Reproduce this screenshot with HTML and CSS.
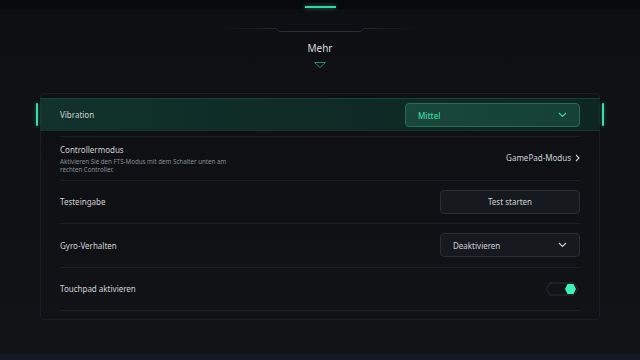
FILE: index.html
```html
<!DOCTYPE html>
<html lang="de">

<head>
  <meta charset="UTF-8">
  <meta name="viewport" content="width=device-width, initial-scale=1.0">
  <title>Mehr</title>
  <link rel="stylesheet" href="styles.css">
</head>

<body>
  <div class="topbar">
    <span class="tab-indicator"></span>
  </div>

  <header class="header">
    <svg class="header-line" width="200" height="6" viewBox="0 0 200 6">
      <defs>
        <linearGradient id="fade" x1="0" x2="1" y1="0" y2="0">
          <stop offset="0" stop-color="#2b2f35" stop-opacity="0" />
          <stop offset="0.35" stop-color="#2b2f35" />
          <stop offset="0.65" stop-color="#2b2f35" />
          <stop offset="1" stop-color="#2b2f35" stop-opacity="0" />
        </linearGradient>
      </defs>
      <polyline points="0,1.5 56,1.5 59,4.5 141,4.5 144,1.5 200,1.5" fill="none" stroke="url(#fade)" stroke-width="1" />
    </svg>
    <h1>Mehr</h1>
    <svg class="header-line" width="200" height="8" viewBox="0 0 200 8">
      <line x1="0" y1="3.5" x2="200" y2="3.5" stroke="url(#fade)" stroke-width="1" />
      <polygon points="94.5,1.5 105.5,1.5 100,6.5" fill="#0e1014" stroke="#2f8a6d" stroke-width="1" />
    </svg>
  </header>

  <main class="panel">
    <div class="row row-active">
      <div class="row-highlight">
        <span class="label">Vibration</span>
        <button class="select select-active" type="button">
          <span>Mittel</span>
          <svg width="9" height="6" viewBox="0 0 9 6"><polyline points="1,1 4.5,4.5 8,1" fill="none" stroke="currentColor" stroke-width="1.1" /></svg>
        </button>
      </div>
    </div>
    <div class="divider"></div>

    <div class="row">
      <div class="text">
        <span class="label">Controllermodus</span>
        <p class="hint">Aktivieren Sie den FTS-Modus mit dem Schalter unten am<br>rechten Controller.</p>
      </div>
      <a class="link">GamePad-Modus
        <svg width="5" height="8" viewBox="0 0 5 8"><polyline points="1,1 4,4 1,7" fill="none" stroke="currentColor" stroke-width="1.1" /></svg>
      </a>
    </div>

    <div class="row">
      <span class="label">Testeingabe</span>
      <button class="btn" type="button">Test starten</button>
    </div>

    <div class="row">
      <span class="label">Gyro-Verhalten</span>
      <button class="select" type="button">
        <span>Deaktivieren</span>
        <svg width="9" height="6" viewBox="0 0 9 6"><polyline points="1,1 4.5,4.5 8,1" fill="none" stroke="currentColor" stroke-width="1.1" /></svg>
      </button>
    </div>

    <div class="row">
      <span class="label">Touchpad aktivieren</span>
      <svg class="toggle" width="34" height="14" viewBox="0 0 34 14">
        <polygon points="5,1 29,1 33,7 29,13 5,13 1,7" fill="#111317" stroke="#2a2e34" stroke-width="1" />
        <polygon points="22.5,2 28.5,2 31,7 28.5,12 22.5,12 20,7" fill="#3cf2b6" />
      </svg>
    </div>
  </main>

  <div class="bottombar"></div>
</body>

</html>
```

FILE: styles.css
```css
* {
  box-sizing: border-box;
}

body {
  --primary-green: #3ddba5;
  --text: #cfd2d6;
  margin: 0;
  width: 640px;
  height: 360px;
  overflow: hidden;
  position: relative;
  font-family: "Noto Sans", "Open Sans", sans-serif;
  font-size: 8px;
  color: var(--text);
  background: linear-gradient(180deg, #0d0f12 0%, #0f1115 60%, #111317 100%);
}

.topbar {
  height: 9px;
  background: #08090b;
  display: flex;
  justify-content: center;
  align-items: flex-end;
}

.tab-indicator {
  width: 31px;
  height: 2px;
  margin-bottom: 1px;
  background: #2fd9a0;
  box-shadow: 0 0 4px rgba(47, 217, 160, 0.6);
}

.header {
  height: 84px;
  padding-top: 18px;
  display: flex;
  flex-direction: column;
  align-items: center;
}

.header-line {
  display: block;
}

.header h1 {
  margin: 8px 0 6px;
  font-size: 10px;
  font-weight: 400;
  line-height: 14px;
  color: #d8dadd;
}

.panel {
  margin: 0 40px;
  height: 227px;
  border: 1px solid #1b1e23;
  border-radius: 4px;
  padding: 0 19px;
}

.row {
  height: 43.5px;
  border-bottom: 1px solid #1d2025;
  display: flex;
  align-items: center;
  justify-content: space-between;
}

.row-active {
  height: 42px;
  margin: 0 -20px;
  padding: 4px 0 5px;
  border-bottom: none;
  position: relative;
  align-items: stretch;
}

.row-active::before,
.row-active::after {
  content: '';
  position: absolute;
  top: 9px;
  width: 2px;
  height: 23px;
  border-radius: 1px;
  background: var(--primary-green);
  box-shadow: 0 0 4px rgba(62, 224, 168, 0.5);
}

.row-active::before {
  left: -4px;
}

.row-active::after {
  right: -4px;
}

.row-highlight {
  flex: 1;
  padding: 0 20px;
  display: flex;
  align-items: center;
  justify-content: space-between;
  background: linear-gradient(90deg, #11332c 0%, #0f2b26 45%, #0e2622 100%);
  border-top: 1px solid #16433a;
  border-bottom: 1px solid #12352e;
}

.divider {
  height: 1px;
  background: #1d2025;
}

.label {
  font-size: 8px;
  line-height: 11px;
}

.text {
  display: flex;
  flex-direction: column;
  padding-top: 1px;
}

.hint {
  margin: 3px 0 0;
  font-size: 6.2px;
  line-height: 8px;
  color: #8a8f96;
}

.link {
  display: flex;
  align-items: center;
  gap: 4px;
  margin-bottom: 1px;
  font-size: 8px;
  color: var(--text);
}

.select,
.btn {
  width: 140px;
  height: 24px;
  border-radius: 4px;
  border: 1px solid #2a2e34;
  background: #16191d;
  color: var(--text);
  font-family: inherit;
  font-size: 8px;
  padding: 0 12px;
}

.btn {
  text-align: center;
}

.select {
  display: flex;
  align-items: center;
  justify-content: space-between;
}

.select-active {
  width: 175px;
  background: linear-gradient(90deg, #18473c, #164135);
  border-color: #2a6a58;
  color: var(--primary-green);
  font-weight: 500;
  margin-top: 1px;
}

.toggle {
  display: block;
  margin-right: 1px;
}

.bottombar {
  position: absolute;
  left: 0;
  right: 0;
  bottom: 0;
  height: 6px;
  background: #121824;
}
```
